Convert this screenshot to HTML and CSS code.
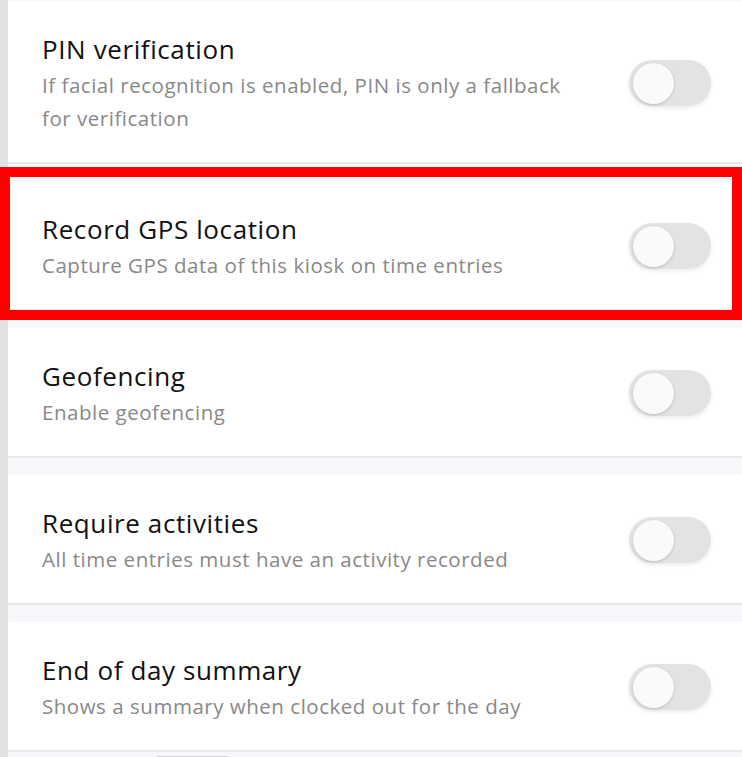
FILE: index.html
```html
<!DOCTYPE html>
<html lang="en">

<head>
    <meta charset="UTF-8">
    <meta name="viewport" content="width=device-width, initial-scale=1.0">
    <title>Kiosk settings</title>
    <link rel="stylesheet" href="styles.css">
</head>

<body>
    <div class="page">
        <div class="side"></div>

        <main class="settings">
            <div class="setting">
                <div class="text">
                    <h3>PIN verification</h3>
                    <p>If facial recognition is enabled, PIN is only a fallback for verification</p>
                </div>
                <label class="switch"><input type="checkbox"><span class="track"></span></label>
            </div>

            <!-- highlighted row -->
            <div class="setting marked">
                <div class="text">
                    <h3>Record GPS location</h3>
                    <p>Capture GPS data of this kiosk on time entries</p>
                </div>
                <label class="switch"><input type="checkbox"><span class="track"></span></label>
            </div>

            <div class="setting">
                <div class="text">
                    <h3>Geofencing</h3>
                    <p>Enable geofencing</p>
                </div>
                <label class="switch"><input type="checkbox"><span class="track"></span></label>
            </div>

            <div class="setting">
                <div class="text">
                    <h3>Require activities</h3>
                    <p>All time entries must have an activity recorded</p>
                </div>
                <label class="switch"><input type="checkbox"><span class="track"></span></label>
            </div>

            <div class="setting">
                <div class="text">
                    <h3>End of day summary</h3>
                    <p>Shows a summary when clocked out for the day</p>
                </div>
                <label class="switch"><input type="checkbox"><span class="track"></span></label>
            </div>

            <div class="more"><span class="handle"></span></div>
        </main>
    </div>
</body>

</html>
```

FILE: styles.css
```css
body {
    font-family: "Open Sans", Lato, sans-serif;
    background-color: #f6f7fb;
    margin: 0;
    padding: 0;
}

.page {
    display: flex;
    min-height: 757px;
}

.side {
    width: 8px;
    flex-shrink: 0;
    background-color: #e2e2e2;
}

.settings {
    flex: 1;
    display: flex;
    flex-direction: column;
    gap: 17px;
    padding-top: 1px;
}

.setting {
    position: relative;
    display: flex;
    align-items: center;
    justify-content: space-between;
    background-color: #fff;
    border-bottom: 2px solid #e8e8e8;
    padding: 29px 31px 27px 34px;
}

.setting.marked::after {
    content: "";
    position: absolute;
    top: -14px;
    bottom: -11px;
    left: -8px;
    right: 0;
    border: 10px solid #ff0000;
}

.text {
    max-width: 540px;
}

.text h3 {
    margin: 0;
    font-size: 26px;
    font-weight: 400;
    line-height: 39px;
    letter-spacing: 0.6px;
    color: #111;
}

.text p {
    margin: 0;
    font-size: 20.5px;
    line-height: 33px;
    letter-spacing: 0.52px;
    color: #888;
}

.switch {
    display: block;
    flex-shrink: 0;
}

.switch input {
    display: none;
}

.track {
    display: block;
    position: relative;
    width: 82px;
    height: 46px;
    border-radius: 23px;
    background-color: #e3e3e3;
    box-shadow: 0 2px 4px rgba(0, 0, 0, 0.08);
}

.track::before {
    content: "";
    position: absolute;
    top: 3px;
    left: 4px;
    width: 41px;
    height: 41px;
    border-radius: 50%;
    background-color: #fafafa;
    box-shadow: 0 1px 3px rgba(0, 0, 0, 0.18);
}

.more {
    margin-top: -13px;
    padding-left: 149px;
    height: 20px;
}

.handle {
    display: block;
    width: 71px;
    height: 3px;
    background-color: #d4d4d8;
}
```
